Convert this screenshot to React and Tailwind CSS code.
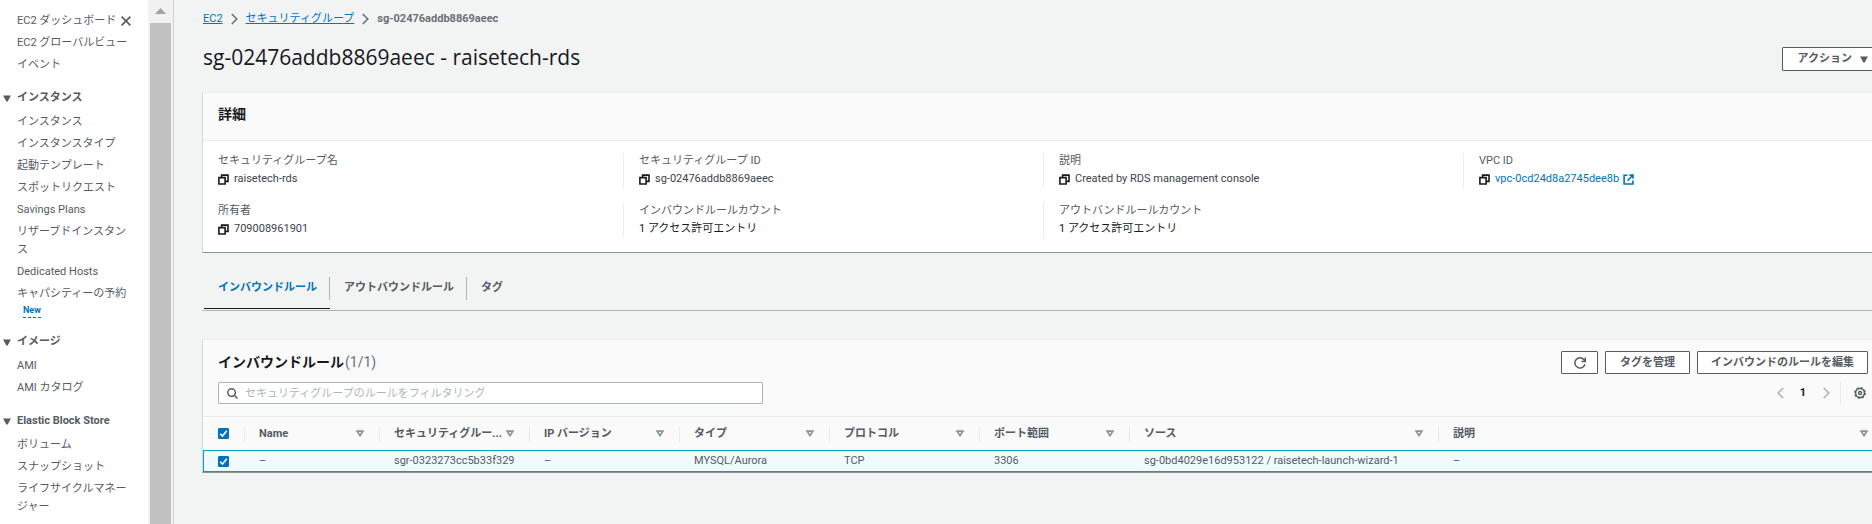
function Caret({ className = "" }) {
  return (
    <svg viewBox="0 0 8 7" className={"h-[7px] w-2 shrink-0 " + className} fill="currentColor" aria-hidden="true">
      <path d="M0 .5h8L4.6 6.6H3.4z" />
    </svg>
  );
}

function SortIcon() {
  return (
    <svg viewBox="0 0 8 7" className="h-[7px] w-2 shrink-0" fill="none" stroke="#879596" strokeWidth="1.7" aria-hidden="true">
      <path d="M1.2 1.2h5.6L4 5.6z" />
    </svg>
  );
}

function CopyIcon() {
  return (
    <svg viewBox="0 0 11 11" className="size-[11px] shrink-0" fill="none" stroke="#16191f" strokeWidth="1.6" aria-hidden="true">
      <path d="M.9 3.6h6.2v6.4H.9z" />
      <path d="M3.6 3.4V1.1h6.4v6.3H7.4" />
    </svg>
  );
}

function ExternalIcon() {
  return (
    <svg viewBox="0 0 11 11" className="size-[11px] shrink-0" fill="none" stroke="currentColor" strokeWidth="1.6" aria-hidden="true">
      <path d="M4.4 1.2H1.1v8.8h8.8V6.6M6.4 1.1h3.6v3.6M9.8 1.3 4.4 6.7" />
    </svg>
  );
}

function Chevron({ left = false, className = "" }) {
  return (
    <svg viewBox="0 0 7 12" className={"h-3 w-[7px] shrink-0 " + className} fill="none" stroke="currentColor" strokeWidth="1.6" aria-hidden="true">
      <path d={left ? "M6.2 1 1.2 6l5 5" : "M.8 1l5 5-5 5"} />
    </svg>
  );
}

function Checkbox({ label }) {
  return (
    <span className="grid size-[11px]">
      <input
        type="checkbox"
        defaultChecked
        aria-label={label}
        className="peer col-start-1 row-start-1 size-[11px] appearance-none rounded-[1px] border border-[#879596] bg-white checked:border-[#0073bb] checked:bg-[#0073bb]"
      />
      <svg viewBox="0 0 11 11" className="pointer-events-none invisible col-start-1 row-start-1 size-[11px] peer-checked:visible" fill="none" stroke="#fff" strokeWidth="1.6" aria-hidden="true">
        <path d="M2.2 5.8l2.3 2.3 4.3-5.4" />
      </svg>
    </span>
  );
}

const sections = [
  {
    items: [["EC2 ダッシュボード"], ["EC2 グローバルビュー"], ["イベント"]],
  },
  {
    title: "インスタンス",
    items: [
      ["インスタンス"],
      ["インスタンスタイプ"],
      ["起動テンプレート"],
      ["スポットリクエスト"],
      ["Savings Plans"],
      ["リザーブドインスタンス"],
      ["Dedicated Hosts"],
      ["キャパシティーの予約", "New"],
    ],
  },
  { title: "イメージ", items: [["AMI"], ["AMI カタログ"]] },
  {
    title: "Elastic Block Store",
    items: [["ボリューム"], ["スナップショット"], ["ライフサイクルマネージャー"]],
  },
];

function Sidebar() {
  return (
    <aside className="flex w-[174px] shrink-0 border-r border-[#cfd3d3] bg-white">
      <nav className="w-[148px] pt-3 pr-[17px] leading-[18px] text-[#545b64]">
        {sections.map((s, i) => (
          <section key={i} className={i ? "mt-[15px]" : ""}>
            {s.title && (
              <h2 className="mb-1.5">
                <button type="button" className="flex items-center gap-1.5 pl-[3px] font-bold whitespace-nowrap">
                  <Caret />
                  {s.title}
                </button>
              </h2>
            )}
            <ul className="flex flex-col gap-1 pl-[17px]">
              {s.items.map(([name, badge], j) => (
                <li key={name} className={i === 0 && j === 0 ? "flex items-center justify-between whitespace-nowrap" : "break-all"}>
                  <a href="#" className={name.includes(" ") ? "whitespace-nowrap" : ""}>{name}</a>
                  {badge && (
                    <span className="flex pl-1.5">
                      <a href="#" className="border-b border-dashed border-[#0073bb] text-[9px] leading-[14px] font-bold text-[#0073bb]">{badge}</a>
                    </span>
                  )}
                  {i === 0 && j === 0 && (
                    <button type="button" aria-label="閉じる">
                      <svg viewBox="0 0 10 10" className="size-[10px]" fill="none" stroke="#545b64" strokeWidth="1.6">
                        <path d="M.6.6l8.8 8.8M9.4.6.6 9.4" />
                      </svg>
                    </button>
                  )}
                </li>
              ))}
            </ul>
          </section>
        ))}
      </nav>
      <div className="flex w-[25px] flex-col items-center bg-[#f1f1f1]" aria-hidden="true">
        <svg viewBox="0 0 11 6" className="mt-2 mb-[9px] h-1.5 w-[11px]" fill="#a3a3a3">
          <path d="M5.5 0 11 6H0z" />
        </svg>
        <div className="w-[21px] flex-1 bg-[#c1c1c1]" />
      </div>
    </aside>
  );
}

const details = [
  { label: "セキュリティグループ名", value: "raisetech-rds", copy: true },
  { label: "セキュリティグループ ID", value: "sg-02476addb8869aeec", copy: true },
  { label: "説明", value: "Created by RDS management console", copy: true },
  { label: "VPC ID", value: "vpc-0cd24d8a2745dee8b", copy: true, link: true },
  { label: "所有者", value: "709008961901", copy: true },
  { label: "インバウンドルールカウント", value: "1 アクセス許可エントリ" },
  { label: "アウトバンドルールカウント", value: "1 アクセス許可エントリ" },
];

function Details() {
  return (
    <section className="mt-[21px] border border-t-[#eaeded] border-r-[#d5dbdb] border-b-[#879596] border-l-[#d5dbdb] bg-white">
      <h2 className="h-12 border-b border-[#eaeded] bg-[#fafafa] px-[15px] pt-3 text-sm leading-[18px] font-bold text-[#16191f]">詳細</h2>
      <dl className="grid grid-cols-4 gap-y-[15px] pt-3 pb-[14px] leading-[14px]">
        {details.map((d, i) => (
          <div key={d.label} className={"flex flex-col gap-1 pt-px pb-0.5 pl-[15px] " + (i % 4 ? "border-l border-[#eaeded]" : "")}>
            <dt className="text-[#545b64]">{d.label}</dt>
            <dd className={"flex items-center gap-[5px] " + (d.copy ? "text-[#3c424a]" : "text-[#16191f]")}>
              {d.copy && (
                <button type="button" aria-label="コピー"><CopyIcon /></button>
              )}
              {d.link ? (
                <a href="#" className="flex items-center gap-1 text-[#0073bb]">{d.value}<ExternalIcon /></a>
              ) : (
                d.value
              )}
            </dd>
          </div>
        ))}
      </dl>
    </section>
  );
}

function Tabs() {
  return (
    <div role="tablist" className="mt-6 flex border-b border-[#aab7b8] pb-px pl-0.5 font-bold text-[#545b64]">
      {["インバウンドルール", "アウトバウンドルール", "タグ"].map((t, i) => (
        <button
          key={t}
          type="button"
          role="tab"
          aria-selected={i === 0}
          className={"h-8 border-b pb-2 " + (i === 0 ? "border-[#16191f] text-[#0073bb]" : "border-transparent")}
        >
          <span className={"flex h-[23px] items-center pr-3 pl-[14px] pb-0.5 " + (i < 2 ? "border-r border-[#aab7b8]" : "")}>{t}</span>
        </button>
      ))}
    </div>
  );
}

const columns = [
  ["Name", "w-[135px]", "–"],
  ["セキュリティグルー...", "w-[150px]", "sgr-0323273cc5b33f329"],
  ["IP バージョン", "w-[150px]", "–"],
  ["タイプ", "w-[150px]", "MYSQL/Aurora"],
  ["プロトコル", "w-[150px]", "TCP"],
  ["ポート範囲", "w-[150px]", "3306"],
  ["ソース", "w-[309px]", "sg-0bd4029e16d953122 / raisetech-launch-wizard-1"],
  ["説明", "", "–"],
];

const buttonClass = "flex h-[23px] items-center justify-center rounded-[1px] border border-[#545b64] bg-white font-bold text-[#545b64]";

function Rules() {
  return (
    <section className="mt-7 border border-t-[#eaeded] border-r-[#d5dbdb] border-b-[#879596] border-l-[#d5dbdb] bg-[#fafafa]">
      <div className="border-b border-[#eaeded] px-[15px] pt-[11px] pb-3">
        <div className="flex items-center justify-between">
          <h2 className="flex gap-px pb-0.5 text-sm leading-5 font-bold text-[#16191f]">
            インバウンドルール<span className="font-normal text-[#687078]">(1/1)</span>
          </h2>
          <div className="flex gap-[7px]">
            <button type="button" aria-label="更新" className={buttonClass + " w-[37px]"}>
              <svg viewBox="0 0 12 12" className="size-3" fill="none" stroke="currentColor" strokeWidth="1.5">
                <path d="M10.9 7.2A5.1 5.1 0 1 1 10 2.8L11.2 4.2M11.3.4v4H7.4" />
              </svg>
            </button>
            <button type="button" className={buttonClass + " px-[14px]"}>タグを管理</button>
            <button type="button" className={buttonClass + " px-[13px]"}>インバウンドのルールを編集</button>
          </div>
        </div>
        <div className="mt-2 flex h-[22px] items-stretch justify-between">
          <label className="flex w-[33%] items-center gap-[7px] rounded-[1px] border border-[#aab7b8] bg-white px-2">
            <svg viewBox="0 0 11 11" className="size-[11px] shrink-0" fill="none" stroke="#545b64" strokeWidth="1.5" aria-hidden="true">
              <circle cx="4.6" cy="4.6" r="3.8" />
              <path d="M7.3 7.3l3.2 3.2" />
            </svg>
            <input
              type="search"
              aria-label="ルールをフィルタリング"
              placeholder="セキュリティグループのルールをフィルタリング"
              className="h-5 min-w-0 flex-1 bg-transparent outline-none placeholder:text-[#aab7b8]"
            />
          </label>
          <div className="flex items-stretch">
            <button type="button" aria-label="前のページ" className="flex w-[22px] items-center justify-center text-[#aab7b8]"><Chevron left /></button>
            <button type="button" className="w-6 text-center font-bold text-[#16191f]">1</button>
            <button type="button" aria-label="次のページ" className="flex w-[22px] items-center justify-center text-[#aab7b8]"><Chevron /></button>
            <button type="button" aria-label="設定" className="ml-[3px] flex items-center border-l border-[#eaeded] pr-0.5 pl-[13px]">
              <svg viewBox="0 0 12 12" className="size-3" fill="none" stroke="#545b64">
                <circle cx="6" cy="6" r="4.4" strokeWidth="1.5" />
                <circle cx="6" cy="6" r="5.4" strokeWidth="1.1" strokeDasharray="2.2 2.04" />
                <circle cx="6" cy="6" r="1.5" strokeWidth="1.4" />
              </svg>
            </button>
          </div>
        </div>
      </div>
      <table className="w-full table-fixed border-collapse text-left text-[#545b64]">
        <thead>
          <tr className="h-[33px]">
            <th className="w-[41px] pl-[15px]">
              <Checkbox label="すべて選択" />
            </th>
            {columns.map(([name, width]) => (
              <th key={name} className={width}>
                <div className="flex h-4 items-center justify-between border-l border-[#eaeded] pr-[15px] pl-[14px]">
                  <span className="whitespace-nowrap">{name}</span>
                  <button type="button" aria-label={name + " で並べ替え"}><SortIcon /></button>
                </div>
              </th>
            ))}
          </tr>
        </thead>
        <tbody>
          <tr className="h-[22px] bg-[#f1faff] outline outline-1 -outline-offset-1 outline-[#00a1c9]">
            <td className="pl-[15px]">
              <Checkbox label="行を選択" />
            </td>
            {columns.map(([name, , value]) => (
              <td key={name} className="pl-[15px] leading-5 whitespace-nowrap">{value}</td>
            ))}
          </tr>
        </tbody>
      </table>
    </section>
  );
}

export default function App() {
  return (
    <div lang="ja" className="flex min-h-screen bg-[#f2f3f3] font-['Roboto','Noto_Sans_CJK_JP',sans-serif] text-[11px] leading-4">
      <Sidebar />
      <main className="min-w-0 flex-1 overflow-hidden pt-2.5 pl-7">
        <div className="-mr-3">
          <nav aria-label="パンくずリスト" className="flex h-[18px] items-center gap-2 pl-px text-[#687078]">
            <a href="#" className="text-[#0073bb] underline">EC2</a>
            <Chevron />
            <a href="#" className="text-[#0073bb] underline">セキュリティグループ</a>
            <Chevron />
            <span className="font-bold">sg-02476addb8869aeec</span>
          </nav>
          <div className="mt-[19px] flex items-start justify-between pl-px">
            <h1 className="font-['Open_Sans',sans-serif] text-[21px] leading-5 text-[#16191f]">sg-02476addb8869aeec - raisetech-rds</h1>
            <button type="button" className="flex h-6 items-center gap-2 rounded-[1px] border border-[#545b64] bg-white px-[15px] font-bold text-[#545b64]">
              アクション
              <Caret />
            </button>
          </div>
          <Details />
          <Tabs />
          <Rules />
        </div>
      </main>
    </div>
  );
}
